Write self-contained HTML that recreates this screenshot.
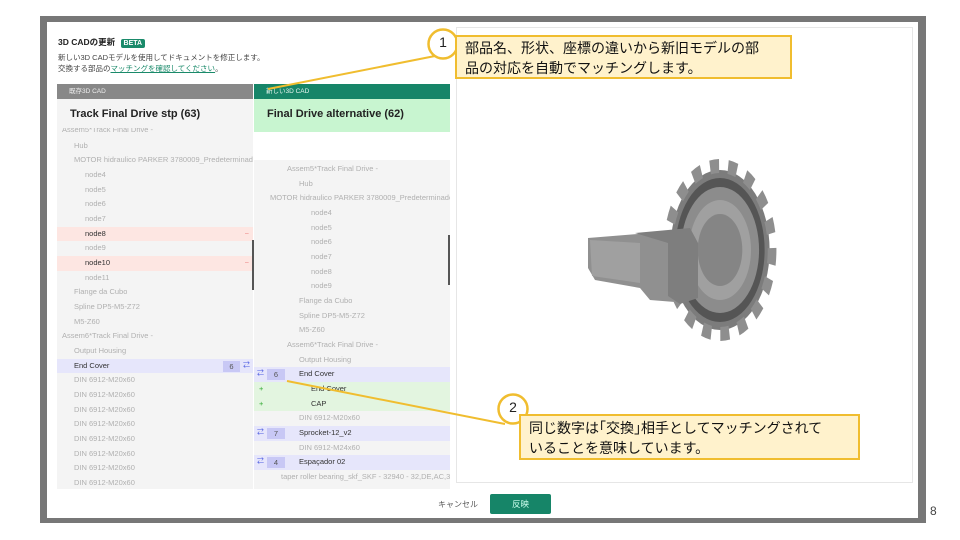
<!DOCTYPE html>
<html><head><meta charset="utf-8"><style>
*{margin:0;padding:0;box-sizing:border-box}
body{width:960px;height:540px;background:#fff;position:relative;overflow:hidden;font-family:"Liberation Sans","Noto Sans CJK JP",sans-serif}
.a{position:absolute}
.frame{left:40px;top:16px;width:886px;height:507px;background:#777}
.modal{left:47px;top:22px;width:871px;height:496px;background:#fff}
.r{position:absolute;height:14.7px;line-height:14.7px;font-size:7.5px;color:#b0b0b0;white-space:nowrap;overflow:hidden}
.d{color:#333}
.pk{background:#fde6e2}
.bl{background:#e6e6fb}
.gr{background:#e3f5e0}
.badge{position:absolute;background:#c8c8f5;color:#555;text-align:center;height:11px;line-height:11px;top:2px;font-size:7.5px}
.ic{position:absolute;color:#4a5ae0;font-size:7px}
.jp{font-family:"Liberation Sans","Noto Sans CJK JP",sans-serif}
</style></head><body>
<div class="a frame"></div>
<div class="a modal"></div>
<div class="a jp" style="left:58px;top:36px;font-size:8.5px;font-weight:bold;color:#222">3D CADの更新 <span style="background:#1a8a6a;color:#fff;font-size:7px;padding:1px 3px;border-radius:2px;margin-left:3px">BETA</span></div>
<div class="a jp" style="left:58px;top:53px;font-size:7.5px;color:#444;line-height:10.5px">新しい3D CADモデルを使用してドキュメントを修正します。<br>交換する部品の<span style="color:#1a8a6a;text-decoration:underline">マッチングを確認してください</span>。</div>

<!-- left column -->
<div class="a" style="left:57px;top:84px;width:196px;height:15px;background:#888;color:#eee;font-size:6.5px;line-height:15px;padding-left:12px">既存3D CAD</div>
<div class="a" style="left:57px;top:99px;width:196px;height:390px;background:#f4f4f4;overflow:hidden"></div>
<div class="a" style="left:70px;top:108px;font-size:11px;font-weight:bold;color:#222">Track Final Drive stp (63)</div>
<div class="a" style="left:57px;top:128px;width:196px;height:361px;overflow:hidden">
<div class="r" style="top:-5px;left:5px">Assem5*Track Final Drive -</div>
<div class="r" style="top:10.5px;left:17px">Hub</div>
<div class="r" style="top:25px;left:17px">MOTOR hidraulico PARKER 3780009_Predeterminado</div>
<div class="r" style="top:40px;left:28px">node4</div>
<div class="r" style="top:54.5px;left:28px">node5</div>
<div class="r" style="top:69px;left:28px">node6</div>
<div class="r" style="top:84px;left:28px">node7</div>
<div class="r pk d" style="top:98.5px;left:0;width:196px;padding-left:28px">node8<span style="position:absolute;right:4px;color:#e88">−</span></div>
<div class="r" style="top:113px;left:28px">node9</div>
<div class="r pk d" style="top:128px;left:0;width:196px;padding-left:28px">node10<span style="position:absolute;right:4px;color:#e88">−</span></div>
<div class="r" style="top:142.5px;left:28px">node11</div>
<div class="r" style="top:157px;left:17px">Flange da Cubo</div>
<div class="r" style="top:172px;left:17px">Spline DP5-M5-Z72</div>
<div class="r" style="top:186.5px;left:17px">M5-Z60</div>
<div class="r" style="top:201px;left:5px">Assem6*Track Final Drive -</div>
<div class="r" style="top:216px;left:17px">Output Housing</div>
<div class="r bl d" style="top:230.5px;left:0;width:196px;padding-left:17px">End Cover<span class="badge" style="left:166px;width:17px">6</span><span class="ic" style="left:186px">⇄</span></div>
<div class="r" style="top:245px;left:17px">DIN 6912-M20x60</div>
<div class="r" style="top:260px;left:17px">DIN 6912-M20x60</div>
<div class="r" style="top:274.5px;left:17px">DIN 6912-M20x60</div>
<div class="r" style="top:289px;left:17px">DIN 6912-M20x60</div>
<div class="r" style="top:304px;left:17px">DIN 6912-M20x60</div>
<div class="r" style="top:318.5px;left:17px">DIN 6912-M20x60</div>
<div class="r" style="top:333px;left:17px">DIN 6912-M20x60</div>
<div class="r" style="top:348px;left:17px">DIN 6912-M20x60</div>
</div>
<div class="a" style="left:252px;top:240px;width:2px;height:50px;background:#555"></div>

<!-- right column -->
<div class="a" style="left:254px;top:84px;width:196px;height:15px;background:#168568;color:#e8f5ef;font-size:6.5px;line-height:15px;padding-left:12px">新しい3D CAD</div>
<div class="a" style="left:254px;top:99px;width:196px;height:33px;background:#c8f5d0"></div>
<div class="a" style="left:267px;top:108px;font-size:11px;font-weight:bold;color:#222">Final Drive alternative (62)</div>
<div class="a" style="left:254px;top:160px;width:196px;height:329px;background:#f4f4f4;overflow:hidden">
<div class="r" style="top:2px;left:33px">Assem5*Track Final Drive -</div>
<div class="r" style="top:16.5px;left:45px">Hub</div>
<div class="r" style="top:31px;left:16px">MOTOR hidraulico PARKER 3780009_Predeterminado</div>
<div class="r" style="top:46px;left:57px">node4</div>
<div class="r" style="top:60.5px;left:57px">node5</div>
<div class="r" style="top:75px;left:57px">node6</div>
<div class="r" style="top:90px;left:57px">node7</div>
<div class="r" style="top:104.5px;left:57px">node8</div>
<div class="r" style="top:119px;left:57px">node9</div>
<div class="r" style="top:134px;left:45px">Flange da Cubo</div>
<div class="r" style="top:148.5px;left:45px">Spline DP5-M5-Z72</div>
<div class="r" style="top:163px;left:45px">M5-Z60</div>
<div class="r" style="top:178px;left:33px">Assem6*Track Final Drive -</div>
<div class="r" style="top:192.5px;left:45px">Output Housing</div>
<div class="r bl d" style="top:207px;left:0;width:196px;padding-left:45px"><span class="ic" style="left:3px">⇄</span><span class="badge" style="left:13px;width:18px">6</span>End Cover</div>
<div class="r gr d" style="top:222px;left:0;width:196px;padding-left:57px"><span style="position:absolute;left:5px;color:#3a3">+</span>End Cover</div>
<div class="r gr d" style="top:236.5px;left:0;width:196px;padding-left:57px"><span style="position:absolute;left:5px;color:#3a3">+</span>CAP</div>
<div class="r" style="top:251px;left:45px">DIN 6912-M20x60</div>
<div class="r bl d" style="top:266px;left:0;width:196px;padding-left:45px"><span class="ic" style="left:3px">⇄</span><span class="badge" style="left:13px;width:18px">7</span>Sprocket-12_v2</div>
<div class="r" style="top:280.5px;left:45px">DIN 6912-M24x60</div>
<div class="r bl d" style="top:295px;left:0;width:196px;padding-left:45px"><span class="ic" style="left:3px">⇄</span><span class="badge" style="left:13px;width:18px">4</span>Espaçador 02</div>
<div class="r" style="top:310px;left:27px">taper roller bearing_skf_SKF - 32940 - 32,DE,AC,32</div>
</div>
<div class="a" style="left:448px;top:235px;width:2px;height:50px;background:#555"></div>

<!-- viewer -->
<div class="a" style="left:456px;top:27px;width:457px;height:456px;border:1px solid #e6e6e6;background:#fff"></div>
<svg class="a" style="left:580px;top:150px" width="220" height="200" viewBox="0 0 220 200">
<g transform="translate(140,100) scale(0.62,1)">
<circle r="80" fill="#7c7c7c"/>
<circle r="84" fill="none" stroke="#8e8e8e" stroke-width="14" stroke-dasharray="14.6 14.6"/>
<circle r="72" fill="#555"/>
<circle r="63" fill="#8c8c8c"/>
<circle r="50" fill="#a0a0a0"/>
<circle r="36" fill="#858585"/>
</g>
<path d="M8 88 L70 83 L100 86 L110 93 L110 145 L95 152 L70 150 L60 138 L15 130 L8 118 Z" fill="#909090"/>
<path d="M55 83 L110 78 L118 93 L118 148 L100 154 L88 146 L88 93 Z" fill="#7e7e7e"/>
<path d="M10 90 L60 93 L60 133 L12 126 Z" fill="#a0a0a0"/>
</svg>

<!-- footer -->
<div class="a jp" style="left:438px;top:499px;font-size:8px;color:#555">キャンセル</div>
<div class="a jp" style="left:490px;top:494px;width:61px;height:20px;background:#168568;border-radius:2px;color:#cfe;font-size:8.5px;text-align:center;line-height:20px">反映</div>
<div class="a" style="left:930px;top:504px;font-size:12px;color:#444">8</div>

<!-- callouts -->
<svg class="a" style="left:0;top:0" width="960" height="540">
<line x1="268" y1="89" x2="435" y2="56" stroke="#f0bd2f" stroke-width="2"/>
<line x1="287" y1="381" x2="505" y2="424" stroke="#f0bd2f" stroke-width="2"/>
<circle cx="443" cy="44" r="14.5" fill="#fff" stroke="#f0bd2f" stroke-width="2.5"/>
<circle cx="513" cy="409" r="14.5" fill="#fff" stroke="#f0bd2f" stroke-width="2.5"/>
</svg>
<div class="a" style="left:434px;top:34px;width:18px;text-align:center;font-size:14px;color:#222">1</div>
<div class="a" style="left:504px;top:399px;width:18px;text-align:center;font-size:14px;color:#222">2</div>
<div class="a jp" style="left:455px;top:35px;width:337px;height:44px;background:#fff2cc;border:2px solid #f0bd2f;font-size:14px;line-height:20px;padding:1px 8px;color:#111;white-space:nowrap">部品名、形状、座標の違いから新旧モデルの部<br>品の対応を自動でマッチングします。</div>
<div class="a jp" style="left:519px;top:414px;width:341px;height:46px;background:#fff2cc;border:2px solid #f0bd2f;font-size:14px;line-height:20px;padding:2px 8px;color:#111;white-space:nowrap">同じ数字は｢交換｣相手としてマッチングされて<br>いることを意味しています。</div>
</body></html>
